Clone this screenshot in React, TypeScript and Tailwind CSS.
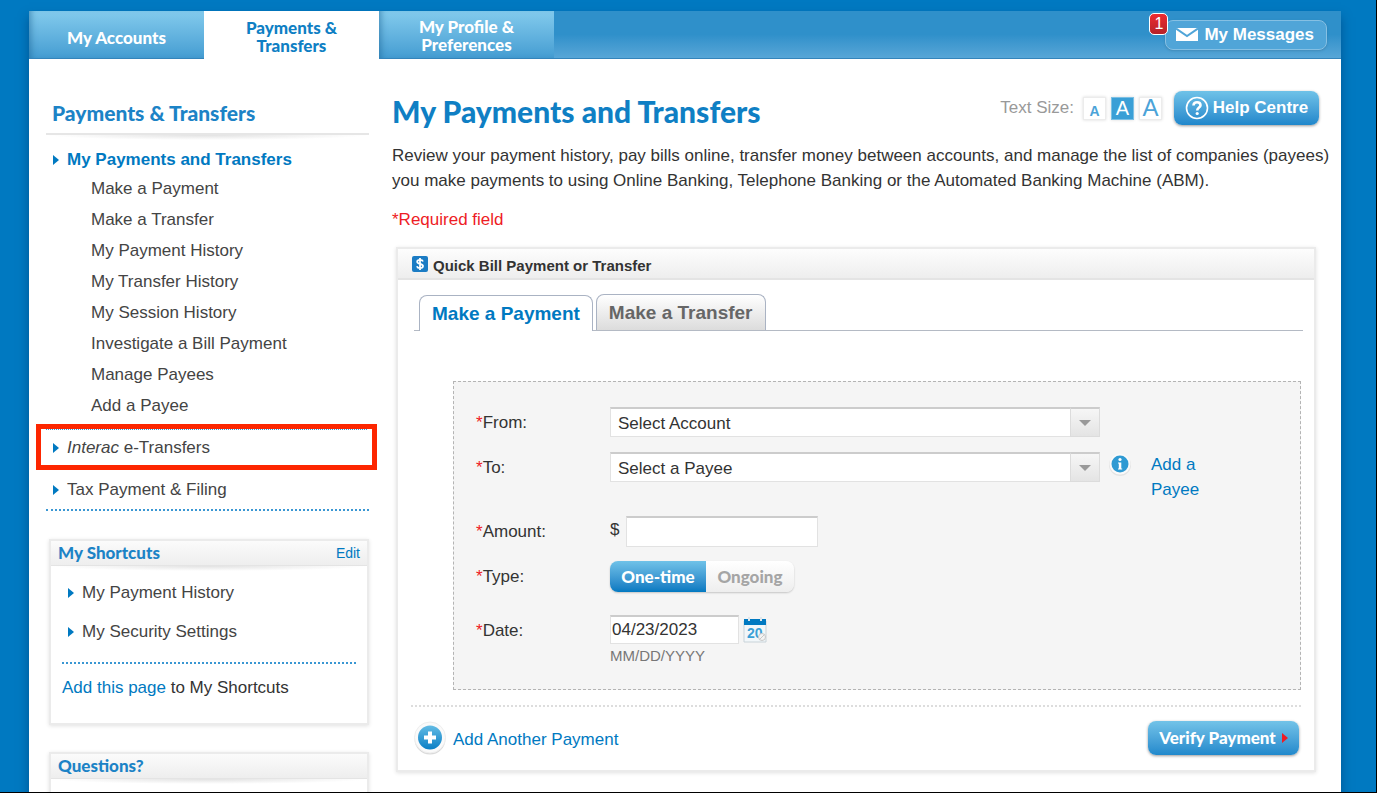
import { useState, type ReactNode } from 'react'

const paymentLinks = [
  'Make a Payment',
  'Make a Transfer',
  'My Payment History',
  'My Transfer History',
  'My Session History',
  'Investigate a Bill Payment',
  'Manage Payees',
  'Add a Payee',
]

const shortcuts = ['My Payment History', 'My Security Settings']

function Caret() {
  return (
    <svg viewBox="0 0 6 10" className="h-[10px] w-[6px] shrink-0 fill-[#0079c1]" aria-hidden="true">
      <path d="M0 0L6 5L0 10Z" />
    </svg>
  )
}

function DottedLine() {
  return <div className="border-t-2 border-dotted border-[#3a97d3]" />
}

// soft curved shadow under a heading rule
function RuleShadow() {
  return <div className="h-[5px] bg-[radial-gradient(ellipse_50%_100%_at_50%_0%,#e2e2e2,#ffffff)]" />
}

function NavTab({ active, children }: { active?: boolean; children: ReactNode }) {
  return (
    <a
      href="#"
      className={`flex w-[175px] flex-col items-center justify-center pt-[3px] text-center font-[Lato] text-[17px] leading-[18px] font-black ${
        active
          ? 'z-10 -mb-px bg-white text-[#0f7fc4]'
          : 'bg-linear-to-b from-[#83cbed] to-[#449dd2] text-white shadow-[inset_6px_0_6px_-4px_rgba(20,90,140,0.5)]'
      }`}
    >
      {children}
    </a>
  )
}

function TopNav() {
  return (
    <nav className="flex h-12 border-b border-[#3484bb] bg-linear-to-b from-[#2f90ca] from-50% to-[#57a6d7]">
      <NavTab>
        <span className="pt-[3px]">My Accounts</span>
      </NavTab>
      <NavTab active>
        <span>Payments &amp;</span>
        <span>Transfers</span>
      </NavTab>
      <NavTab>
        <span>My Profile &amp;</span>
        <span>Preferences</span>
      </NavTab>
      <div className="ml-auto flex items-center pr-[14px]">
        <button className="relative flex h-[30px] items-center gap-[6px] rounded-lg border border-[#86c0e3] bg-[#50a5d8] pr-3 pl-[10px] text-[17px] font-bold text-white shadow-sm">
          <svg viewBox="0 0 22 13" className="h-[13px] w-[22px]" aria-hidden="true">
            <path d="M0 0H22V13H0Z" fill="#fff" />
            <path d="M0 0.500L11 8L22 0.500" fill="none" stroke="#50a5d8" strokeWidth="2" />
          </svg>
          My Messages
          <span className="absolute -top-[8px] -left-[17px] flex h-[22px] w-[19px] items-center justify-center rounded-[5px] border border-white bg-linear-to-b from-[#ee2a30] to-[#b5222a] text-base font-normal">
            1
          </span>
        </button>
      </div>
    </nav>
  )
}

function SideBox({ title, action, children }: { title: string; action?: ReactNode; children?: ReactNode }) {
  return (
    <section className="ml-[3px] border-2 border-[#ebebeb] shadow-[0_1px_4px_rgba(0,0,0,0.12)]">
      <div className="flex h-[25px] items-center justify-between border-b border-[#e4e4e4] bg-linear-to-b from-[#fbfbfb] to-[#eeeeee] px-[7px]">
        <h2 className="font-[Lato] text-[17px] leading-6 font-black text-[#1c83c6]">{title}</h2>
        {action}
      </div>
      <RuleShadow />
      {children}
    </section>
  )
}

function Sidebar() {
  return (
    <aside className="w-[323px] shrink-0 pt-[41px] text-[#444444]">
      <h2 className="border-b-2 border-[#e6e6e6] px-[6px] pb-[7px] font-[Lato] text-[21px] leading-[26px] font-black text-[#1c83c6]">
        Payments &amp; Transfers
      </h2>
      <RuleShadow />
      <a href="#" className="mt-2 flex items-center gap-2 pl-[7px] font-bold text-[#0079c1]">
        <Caret />
        My Payments and Transfers
      </a>
      <ul className="pt-px pb-[3px]">
        {paymentLinks.map((text) => (
          <li key={text} className="flex h-[31px] items-center pl-[45px]">
            <a href="#">{text}</a>
          </li>
        ))}
      </ul>
      <div className="-mr-2 -ml-[10px] border-[5px] border-[#fd2600]">
        <a href="#" className="mx-[5px] flex h-9 items-center gap-2 border-t border-dotted border-[#3a97d3] pl-[7px]">
          <Caret />
          <span>
            <i>Interac</i> e-Transfers
          </span>
        </a>
      </div>
      <a href="#" className="flex h-[39px] items-center gap-2 pl-[7px]">
        <Caret />
        Tax Payment &amp; Filing
      </a>
      <DottedLine />

      <div className="mt-7 flex flex-col gap-[27px]">
        <SideBox
          title="My Shortcuts"
          action={
            <a href="#" className="text-sm text-[#0079c1]">
              Edit
            </a>
          }
        >
          <ul className="pt-0.5">
            {shortcuts.map((text) => (
              <li key={text}>
                <a href="#" className="flex h-[39px] items-center gap-2 pl-[17px]">
                  <Caret />
                  {text}
                </a>
              </li>
            ))}
          </ul>
          <div className="mx-[11px] mt-[11px]">
            <DottedLine />
          </div>
          <p className="px-[11px] pt-3 pb-[23px] text-[#333333]">
            <a href="#" className="text-[#0079c1]">
              Add this page
            </a>{' '}
            to My Shortcuts
          </p>
        </SideBox>
        <SideBox title="Questions?">
          <div className="h-20" />
        </SideBox>
      </div>
    </aside>
  )
}

function TextSize() {
  const [size, setSize] = useState(1)
  const glyphs = ['pt-[5px] text-sm font-bold', 'text-xl', 'text-2xl']

  return (
    <div className="flex h-[34px] items-center gap-[5px] text-[#999999]">
      <span className="pr-1">Text Size:</span>
      {glyphs.map((glyph, i) => (
        <button
          key={glyph}
          onClick={() => setSize(i)}
          className={`flex h-[23px] w-[23px] items-center justify-center border leading-5 shadow-[0_0_3px_rgba(0,0,0,0.15)] ${glyph} ${
            size === i ? 'border-[#7cc0e4] bg-[#3a9fd6] text-white' : 'border-[#ececec] bg-white text-[#4ba3d8]'
          }`}
        >
          A
        </button>
      ))}
    </div>
  )
}

function Field({ label, id, children }: { label: string; id: string; children: ReactNode }) {
  return (
    <div className="flex items-start">
      <label htmlFor={id} className="w-[134px] shrink-0 leading-[31px]">
        <span className="text-[#ee1c25]">*</span>
        {label}:
      </label>
      {children}
    </div>
  )
}

function Select({ id, placeholder }: { id: string; placeholder: string }) {
  return (
    <div className="relative w-[490px]">
      <select
        id={id}
        className="h-[30px] w-full appearance-none border border-t-2 border-[#e2e2e2] border-t-[#cccccc] bg-white px-[7px] pt-0.5 text-[#333333]"
      >
        <option>{placeholder}</option>
      </select>
      <span className="pointer-events-none absolute inset-y-0 right-0 flex h-[30px] w-[30px] items-center justify-center border border-t-2 border-[#dcdcdc] border-t-[#cccccc] bg-linear-to-b from-[#f6f6f6] to-[#e4e4e4]">
        <svg viewBox="0 0 12 6" className="h-[6px] w-3 fill-[#999999]" aria-hidden="true">
          <path d="M0 0H12L6 6Z" />
        </svg>
      </span>
    </div>
  )
}

function InfoIcon() {
  return (
    <svg viewBox="0 0 24 24" className="h-6 w-6" aria-hidden="true">
      <circle cx="12" cy="13" r="11" fill="#e4e4e4" />
      <circle cx="12" cy="12" r="10.500" fill="#fafafa" />
      <circle cx="12" cy="12" r="8.500" fill="#2f9ad3" />
      <circle cx="12" cy="7.500" r="1.600" fill="#fff" />
      <path d="M10 10.500H13.300V16.500H14.200V17.500H10V16.500H10.800V11.500H10Z" fill="#fff" />
    </svg>
  )
}

function PlusIcon() {
  return (
    <svg viewBox="0 0 34 34" className="h-[34px] w-[34px]" aria-hidden="true">
      <defs>
        <linearGradient id="plus" x1="0" y1="0" x2="0" y2="1">
          <stop offset="0" stopColor="#62bbe4" />
          <stop offset="1" stopColor="#0b7fc5" />
        </linearGradient>
      </defs>
      <circle cx="17" cy="18" r="15.500" fill="#dadada" />
      <circle cx="17" cy="16.500" r="15.500" fill="#fafafa" stroke="#eeeeee" />
      <circle cx="17" cy="16.500" r="12" fill="url(#plus)" />
      <path d="M15 10.500H19V14.500H23V18.500H19V22.500H15V18.500H11V14.500H15Z" fill="#fff" />
    </svg>
  )
}

function CalendarIcon() {
  return (
    <svg viewBox="0 0 24 26" className="h-[26px] w-6" aria-hidden="true">
      <path d="M1 4H23V25H1Z" fill="#f2f7fa" stroke="#c9d3d9" />
      <path d="M1 2H23V8H1Z" fill="#0079c1" />
      <path d="M6 0V4M18 0V4" stroke="#dfe7ec" strokeWidth="2" />
      <text x="4" y="21" fontSize="14" fontWeight="bold" fill="#3a9fd6" fontFamily="Liberation Sans">
        20
      </text>
      <circle cx="19" cy="20" r="3.500" fill="#f4f4f4" stroke="#c8c8c8" />
      <path d="M16.500 22.500L21.500 17.500" stroke="#c8c8c8" />
    </svg>
  )
}

function PaymentForm() {
  const [type, setType] = useState('One-time')

  return (
    <form className="mt-[50px] mr-[13px] ml-[55px] flex flex-col gap-[14px] border border-dashed border-[#b4b4b4] bg-[#f5f5f5] pt-[25px] pb-[21px] pl-[22px] text-[#333333]">
      <Field label="From" id="from">
        <Select id="from" placeholder="Select Account" />
      </Field>
      <div className="flex">
        <Field label="To" id="to">
          <Select id="to" placeholder="Select a Payee" />
        </Field>
        <button type="button" className="ml-2 self-start" aria-label="About payees">
          <InfoIcon />
        </button>
        <a href="#" className="ml-[19px] w-16 leading-[25px] text-[#0079c1]">
          Add a Payee
        </a>
      </div>
      <Field label="Amount" id="amount">
        <span className="w-4 leading-7">$</span>
        <input
          id="amount"
          className="h-[31px] w-[192px] border border-t-2 border-[#e2e2e2] border-t-[#cccccc] bg-white px-1"
        />
      </Field>
      <Field label="Type" id="type">
        <div id="type" role="group" aria-label="Type" className="flex rounded-lg shadow-[0_1px_2px_rgba(0,0,0,0.2)]">
          {['One-time', 'Ongoing'].map((option) => (
            <button
              key={option}
              type="button"
              aria-pressed={type === option}
              onClick={() => setType(option)}
              className={`h-[31px] font-[Lato] text-[17px] font-black first:w-24 first:rounded-l-lg last:w-[88px] last:rounded-r-lg ${
                type === option
                  ? 'bg-linear-to-b from-[#6fc2e8] to-[#0079c1] text-white'
                  : 'bg-linear-to-b from-white to-[#eeeeee] text-[#a5a5a5]'
              }`}
            >
              {option}
            </button>
          ))}
        </div>
      </Field>
      <div className="pt-[9px]">
        <Field label="Date" id="date">
          <div>
            <div className="flex gap-1">
              <input
                id="date"
                defaultValue="04/23/2023"
                className="h-[29px] w-[129px] border border-t-2 border-[#e2e2e2] border-t-[#cccccc] bg-white px-px"
              />
              <button type="button" aria-label="Choose a date">
                <CalendarIcon />
              </button>
            </div>
            <p className="text-[15px] text-[#777777]">MM/DD/YYYY</p>
          </div>
        </Field>
      </div>
    </form>
  )
}

function BillPanel() {
  return (
    <section className="mt-[15px] mr-[3px] ml-1 border-2 border-[#ebebeb] shadow-[0_1px_4px_rgba(0,0,0,0.12)]">
      <h2 className="flex h-[31px] items-center gap-[5px] border-b-2 border-[#e4e4e4] bg-linear-to-b from-[#fdfdfd] to-[#eeeeee] pl-[14px] text-[15px] font-bold text-[#333333]">
        <svg viewBox="0 0 16 16" className="h-4 w-4" aria-hidden="true">
          <rect width="16" height="16" rx="2" fill="#1b7cc4" />
          <path
            d="M11 5.500C10.500 4 9.500 3.800 8 3.800C6.200 3.800 5.200 4.600 5.200 5.700C5.200 8.600 11 7 11 10.100C11 11.500 9.700 12.200 8 12.200C6.200 12.200 5.300 11.600 4.900 10.300M8 2V14"
            fill="none"
            stroke="#fff"
            strokeWidth="1.800"
          />
        </svg>
        <span className="pt-1">Quick Bill Payment or Transfer</span>
      </h2>

      <div className="mr-[11px] ml-4 mt-[14px] flex items-end gap-[3px] border-b border-[#b4bac4] pl-[5px] text-[19px] font-bold">
        <button className="z-10 -mb-px h-9 rounded-t-lg border border-b-0 border-[#aab3c3] bg-white px-3 text-[#0079c1]">
          Make a Payment
        </button>
        <button className="h-9 rounded-t-lg border border-b-0 border-[#aab3c3] bg-linear-to-b from-white to-[#dcdcdc] px-3 text-[#666666]">
          Make a Transfer
        </button>
      </div>

      <PaymentForm />

      <div className="mx-[13px] mt-[15px] flex items-center justify-between border-t-2 border-dotted border-[#dddddd] pt-[14px] pb-[15px]">
        <button className="flex items-center gap-[6px] pl-[2px] text-[#0079c1]">
          <PlusIcon />
          <span className="pt-[3px]">Add Another Payment</span>
        </button>
        <button className="mr-[2px] flex h-[34px] w-[151px] items-center justify-center gap-[6px] rounded-lg bg-linear-to-b from-[#72c3e8] to-[#2089cc] font-[Lato] text-[17px] font-black text-white shadow-[0_1px_3px_rgba(0,0,0,0.4)]">
          Verify Payment
          <svg viewBox="0 0 6 10" className="h-[10px] w-[6px] fill-[#ee1c25]" aria-hidden="true">
            <path d="M0 0L6 5L0 10Z" />
          </svg>
        </button>
      </div>
    </section>
  )
}

export default function App() {
  return (
    <div className="h-screen overflow-hidden border-r border-b border-black bg-[#0079c1] pt-[11px] pr-[35px] pl-[29px] font-['Liberation_Sans',Arial,sans-serif] text-[17px] leading-6">
      <div className="min-h-full bg-white shadow-[0_6px_10px_rgba(0,50,100,0.5)]">
        <TopNav />
        <div className="flex items-start pr-[22px] pl-[17px]">
          <Sidebar />
          <main className="ml-[23px] flex-1 pt-8 text-[#333333]">
            <div className="flex items-start">
              <h1 className="grow font-[Lato] text-[30px] leading-10 font-black text-[#0f7fc4]">
                My Payments and Transfers
              </h1>
              <TextSize />
              <button className="ml-3 flex h-[34px] w-[145px] items-center justify-center gap-1 rounded-lg bg-linear-to-b from-[#6fc2e8] to-[#1f87cb] font-bold text-white shadow-[0_1px_3px_rgba(0,0,0,0.4)]">
                <svg viewBox="0 0 24 24" className="h-6 w-6" aria-hidden="true">
                  <circle cx="12" cy="12" r="10.500" fill="none" stroke="#fff" strokeWidth="1.600" />
                  <path
                    d="M8.500 9.500C8.500 7.300 10 6.200 12 6.200C14 6.200 15.500 7.300 15.500 9.200C15.500 11.500 12.200 11.500 12.200 14.500"
                    fill="none"
                    stroke="#fff"
                    strokeWidth="2.600"
                  />
                  <circle cx="12.200" cy="17.500" r="1.600" fill="#fff" />
                </svg>
                Help Centre
              </button>
            </div>
            <p className="-mr-4 pt-3 leading-[25px]">
              Review your payment history, pay bills online, transfer money between accounts, and manage the list of
              companies (payees) you make payments to using Online Banking, Telephone Banking or the Automated Banking
              Machine (ABM).
            </p>
            <p className="mt-[14px] leading-[25px] text-[#ee1c25]">*Required field</p>
            <BillPanel />
          </main>
        </div>
      </div>
    </div>
  )
}
